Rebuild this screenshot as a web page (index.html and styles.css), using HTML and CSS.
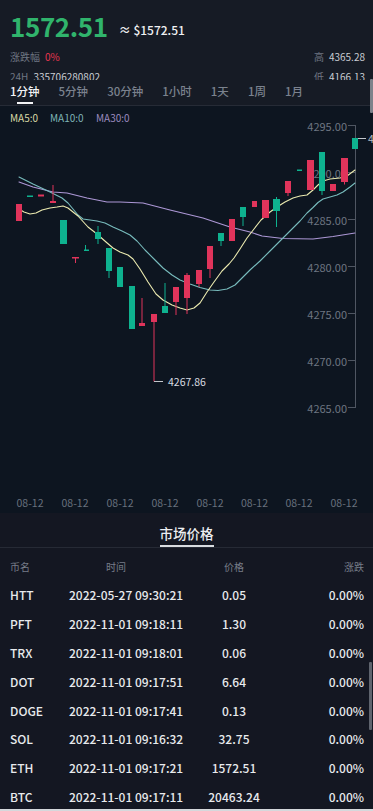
FILE: index.html
```html
<!DOCTYPE html>
<html lang="zh-CN">
<head>
<meta charset="utf-8">
<meta name="viewport" content="width=device-width, initial-scale=1">
<title>行情</title>
<link rel="stylesheet" href="styles.css">
</head>
<body>
<div class="top">
  <div class="price-row">
    <span class="price">1572.51</span>
    <span class="approx">≈ $1572.51</span>
  </div>
  <div class="info">
    <div class="info-row">
      <div><span class="lbl">涨跌幅</span><span class="red">0%</span></div>
      <div><span class="lbl">高</span><span class="val">4365.28</span></div>
    </div>
    <div class="info-row">
      <div><span class="lbl">24H</span><span class="val">335706280802</span></div>
      <div><span class="lbl">低</span><span class="val">4166.13</span></div>
    </div>
  </div>
  <div class="tabs">
    <div class="tab active">1分钟</div>
    <div class="tab">5分钟</div>
    <div class="tab">30分钟</div>
    <div class="tab">1小时</div>
    <div class="tab">1天</div>
    <div class="tab">1周</div>
    <div class="tab">1月</div>
  </div>
</div>

<div class="chart">
<svg class="kline" width="373" height="407" viewBox="0 106 373 407" xmlns="http://www.w3.org/2000/svg">
  <g class="legend">
    <text x="10" y="121.5" fill="#d9d9a6">MA5:0</text>
    <text x="50" y="121.5" fill="#7fb4b6">MA10:0</text>
    <text x="96" y="121.5" fill="#9b8abf">MA30:0</text>
  </g>
  <g class="ylabels">
    <text x="347" y="125.5">4295.00</text>
    <text x="347" y="172.5">4290.00</text>
    <text x="347" y="219.5">4285.00</text>
    <text x="347" y="266.5">4280.00</text>
    <text x="347" y="313.5">4275.00</text>
    <text x="347" y="360.5">4270.00</text>
    <text x="347" y="407.5">4265.00</text>
  </g>
  <g class="axis">
    <path d="M355.5 125 V408 M348 125.5 H355.5 M348 172.5 H355.5 M348 219.5 H355.5 M348 266.5 H355.5 M348 313.5 H355.5 M348 360.5 H355.5 M348 407.5 H355.5"/>
  </g>
  <g class="xlabels">
    <text x="30" y="502.5">08-12</text>
    <text x="75" y="502.5">08-12</text>
    <text x="120" y="502.5">08-12</text>
    <text x="165" y="502.5">08-12</text>
    <text x="210" y="502.5">08-12</text>
    <text x="254.5" y="502.5">08-12</text>
    <text x="299" y="502.5">08-12</text>
    <text x="344" y="502.5">08-12</text>
  </g>

  <polyline class="ma30" points="19,182 33,187 53,192 67,193 87,198 107,202 120,202 143,203 170,210 203,218 230,227 250,232 262,236 283,238.5 313,239 333,236.5 355,233"/>
  <polyline class="ma10" points="19,177 33,184 50,192 62,198 68,203 73,209 78,215 83,219 90,220 97,221 105,223 113,227 122,231 130,235 137,241 145,250 155,260 163,268 172,275 180,280 190,284 200,287.5 210,290 218,290.5 227,289 235,285 242,278 250,270 260,261 270,251 280,241 290,231 300,221 307,213 313,207.5 318,202.5 323,199 330,197 337,195 343,192 350,187 355,183"/>
  <polyline class="ma5" points="19,209 24,212 30,214 36,213 42,210 50,208 57,207 63,206 68,208 73,212 78,216 88,227 97,234 106,242 113,248 120,252 128,255 133,259 140,269 148,282 156,294 163,300 172,305 180,308 187,310 194,308 200,303 207,292 214,282 222,271 229,264 234,258 240,249 247,238 254,229 261,220 270,212 277,207 285,202 293,198 300,196 307,195 313,190 318,185 323,181 330,179 340,178 347,176 355,170"/>

  <g class="up">
    <rect x="27" y="195.5" width="6" height="1.5"/>
    <rect x="60" y="220" width="7" height="24"/>
    <rect x="84" y="249.5" width="5" height="1.5"/><rect x="85" y="245" width="1" height="5"/>
    <rect x="95" y="232" width="6" height="7"/><rect x="97.5" y="226" width="1" height="18"/>
    <rect x="106" y="248" width="6" height="23"/><rect x="108.5" y="271" width="1" height="7"/>
    <rect x="117" y="267" width="6" height="20"/>
    <rect x="129" y="286" width="6" height="43"/>
    <rect x="162" y="306" width="6" height="7"/><rect x="164.5" y="283" width="1" height="23"/>
    <rect x="218" y="233" width="6" height="8"/><rect x="220.5" y="241" width="1" height="5"/>
    <rect x="240" y="207" width="6" height="10"/><rect x="242.5" y="217" width="1" height="9"/>
    <rect x="273" y="199" width="7" height="12"/><rect x="276" y="197" width="1" height="30"/>
    <rect x="297" y="169.5" width="5" height="1.5"/>
    <rect x="319" y="152" width="6" height="39"/><rect x="321.5" y="191" width="1" height="4"/>
    <rect x="352" y="138" width="6" height="11"/>
  </g>
  <g class="down">
    <rect x="16" y="204" width="6" height="17"/>
    <rect x="38" y="194.5" width="6" height="2"/>
    <rect x="50" y="201" width="6" height="2"/><rect x="52.5" y="185" width="1" height="16"/>
    <rect x="72" y="257" width="7" height="1.5"/><rect x="75" y="258" width="1" height="5"/>
    <rect x="139" y="323" width="6" height="3"/><rect x="141.5" y="298" width="1" height="25"/>
    <rect x="151" y="314" width="6" height="8"/><rect x="153.5" y="322" width="1" height="59.5"/>
    <rect x="173" y="287" width="6" height="15"/><rect x="175.5" y="302" width="1" height="13"/>
    <rect x="184" y="275" width="6" height="23"/><rect x="186.5" y="273" width="1" height="41"/>
    <rect x="196" y="270" width="6" height="14"/><rect x="198.5" y="284" width="1" height="3"/>
    <rect x="207" y="246" width="6" height="23"/><rect x="209.5" y="269" width="1" height="9"/>
    <rect x="229" y="219" width="6" height="22"/>
    <rect x="252" y="201" width="5" height="6"/>
    <rect x="262" y="200" width="7" height="18"/>
    <rect x="285" y="181" width="6" height="12"/><rect x="287.5" y="193" width="1" height="3"/>
    <rect x="307" y="160" width="7" height="30"/>
    <rect x="330" y="184" width="6" height="7"/>
    <rect x="341" y="158" width="7" height="24"/><rect x="344" y="182" width="1" height="2.5"/>
  </g>

  <path class="mark" d="M154 381.5 H163"/>
  <text class="low" x="168" y="381.5">4267.86</text>
  <path class="mark" d="M358 138.5 H366"/>
  <text class="tag" x="368" y="138.5">4294.50</text>
</svg>
</div>

<div class="market">
  <div class="mtab"><span>市场价格</span></div>
  <div class="table">
    <div class="row head">
      <div>币名</div><div class="h-time">时间</div><div class="c-price">价格</div><div class="c-chg">涨跌</div>
    </div>
    <div class="row"><div>HTT</div><div>2022-05-27 09:30:21</div><div class="c-price">0.05</div><div class="c-chg">0.00%</div></div>
    <div class="row"><div>PFT</div><div>2022-11-01 09:18:11</div><div class="c-price">1.30</div><div class="c-chg">0.00%</div></div>
    <div class="row"><div>TRX</div><div>2022-11-01 09:18:01</div><div class="c-price">0.06</div><div class="c-chg">0.00%</div></div>
    <div class="row"><div>DOT</div><div>2022-11-01 09:17:51</div><div class="c-price">6.64</div><div class="c-chg">0.00%</div></div>
    <div class="row"><div>DOGE</div><div>2022-11-01 09:17:41</div><div class="c-price">0.13</div><div class="c-chg">0.00%</div></div>
    <div class="row"><div>SOL</div><div>2022-11-01 09:16:32</div><div class="c-price">32.75</div><div class="c-chg">0.00%</div></div>
    <div class="row"><div>ETH</div><div>2022-11-01 09:17:21</div><div class="c-price">1572.51</div><div class="c-chg">0.00%</div></div>
    <div class="row"><div>BTC</div><div>2022-11-01 09:17:11</div><div class="c-price">20463.24</div><div class="c-chg">0.00%</div></div>
  </div>
</div>

<div class="thumb thumb-top"></div>
<div class="thumb thumb-table"></div>
<div class="bottom-edge"></div>
</body>
</html>
```

FILE: styles.css
```css
html, body {
  margin: 0;
  padding: 0;
}
body {
  width: 373px;
  height: 811px;
  overflow: hidden;
  position: relative;
  background: #141722;
  font-family: "Noto Sans CJK SC", "Noto Sans", sans-serif;
  color: #e6e8eb;
}

/* ---------- top ---------- */
.top {
  background: #161b25;
  padding: 9px 0 0 0;
}
.price-row {
  display: flex;
  align-items: baseline;
  gap: 11px;
  padding-left: 10px;
  height: 34px;
  line-height: 34px;
}
.price {
  font-size: 26px;
  font-weight: 700;
  color: #30b46c;
  letter-spacing: -0.4px;
}
.approx {
  font-size: 12px;
  font-weight: 500;
  color: #f0f1f3;
  position: relative;
  top: -2px;
}
.info {
  margin-top: 4px;
  height: 33px;
  overflow: hidden;
  padding: 0 8px 0 10px;
}
.info-row {
  display: flex;
  justify-content: space-between;
  height: 20px;
  line-height: 20px;
  font-size: 10px;
}
.lbl {
  color: #6f7682;
  margin-right: 5px;
}
.val {
  color: #c9cdd3;
}
.red {
  color: #e5354f;
}
.tabs {
  display: flex;
  gap: 19px;
  padding-left: 10px;
  height: 25px;
  border-bottom: 1px solid #262b36;
}
.tab {
  display: flex;
  flex-direction: column;
  align-items: center;
  font-size: 11.5px;
  font-weight: 500;
  line-height: 22px;
  color: #7b828e;
}
.tab.active {
  color: #f2f3f5;
}
.tab.active::after {
  content: "";
  display: block;
  width: 16px;
  height: 2px;
  background: #f2f3f5;
}

/* ---------- chart ---------- */
.chart {
  height: 407px;
  background: #0d1520;
}
.kline {
  display: block;
  overflow: hidden;
}
.legend text {
  font-size: 10px;
  font-family: "Noto Sans CJK SC", "Noto Sans", sans-serif;
}
.ylabels text {
  font-size: 11px;
  fill: #6e7682;
  text-anchor: end;
  dominant-baseline: central;
  font-family: "Noto Sans CJK SC", "Noto Sans", sans-serif;
}
.xlabels text {
  font-size: 10.5px;
  fill: #68707d;
  text-anchor: middle;
  dominant-baseline: central;
  font-family: "Noto Sans CJK SC", "Noto Sans", sans-serif;
}
.axis path {
  stroke: #4f5662;
  stroke-width: 1;
  fill: none;
}
.ma5, .ma10, .ma30 {
  fill: none;
  stroke-width: 1.1;
  stroke-linejoin: round;
  stroke-linecap: round;
}
.ma5 { stroke: #ecebb0; }
.ma10 { stroke: #78bcbd; }
.ma30 { stroke: #ad98d6; }
.up rect { fill: #0eb28f; }
.down rect { fill: #e0345b; }
.mark {
  stroke: #c3c7cd;
  stroke-width: 1;
  fill: none;
}
.low, .tag {
  font-size: 10.5px;
  fill: #d8dbe0;
  dominant-baseline: central;
  font-family: "Noto Sans CJK SC", "Noto Sans", sans-serif;
}
.tag {
  fill: #b9bdc4;
}

/* ---------- market ---------- */
.market {
  background: #141722;
}
.mtab {
  display: flex;
  justify-content: center;
  height: 35px;
  box-sizing: border-box;
  border-bottom: 1px solid #262a35;
}
.mtab span {
  display: block;
  margin-top: 10px;
  line-height: 20px;
  font-size: 13.5px;
  font-weight: 500;
  color: #eceef1;
  padding-bottom: 1px;
  border-bottom: 2px solid #d9dce0;
  height: 21px;
}
.table {
  padding: 4.6px 9px 0 10px;
}
.row {
  display: grid;
  grid-template-columns: 59px 120px 90px 1fr;
  height: 28.8px;
  line-height: 28.8px;
  font-size: 12px;
  font-weight: 500;
  color: #e8eaed;
  white-space: nowrap;
}
.row.head {
  font-size: 10px;
  font-weight: 400;
  color: #777d89;
}
.h-time {
  padding-left: 37px;
}
.c-price {
  text-align: center;
}
.c-chg {
  text-align: right;
}

/* overlays */
.thumb {
  position: absolute;
  right: 0;
  width: 3px;
  background: #7d828b;
  border-radius: 1px;
}
.thumb-top {
  top: 79px;
  height: 34px;
}
.thumb-table {
  top: 662px;
  height: 68px;
  right: 1px;
  background: #5f646e;
}
.bottom-edge {
  position: absolute;
  left: 0;
  right: 0;
  bottom: 0;
  height: 2px;
  background: #d5d8dc;
}
```
